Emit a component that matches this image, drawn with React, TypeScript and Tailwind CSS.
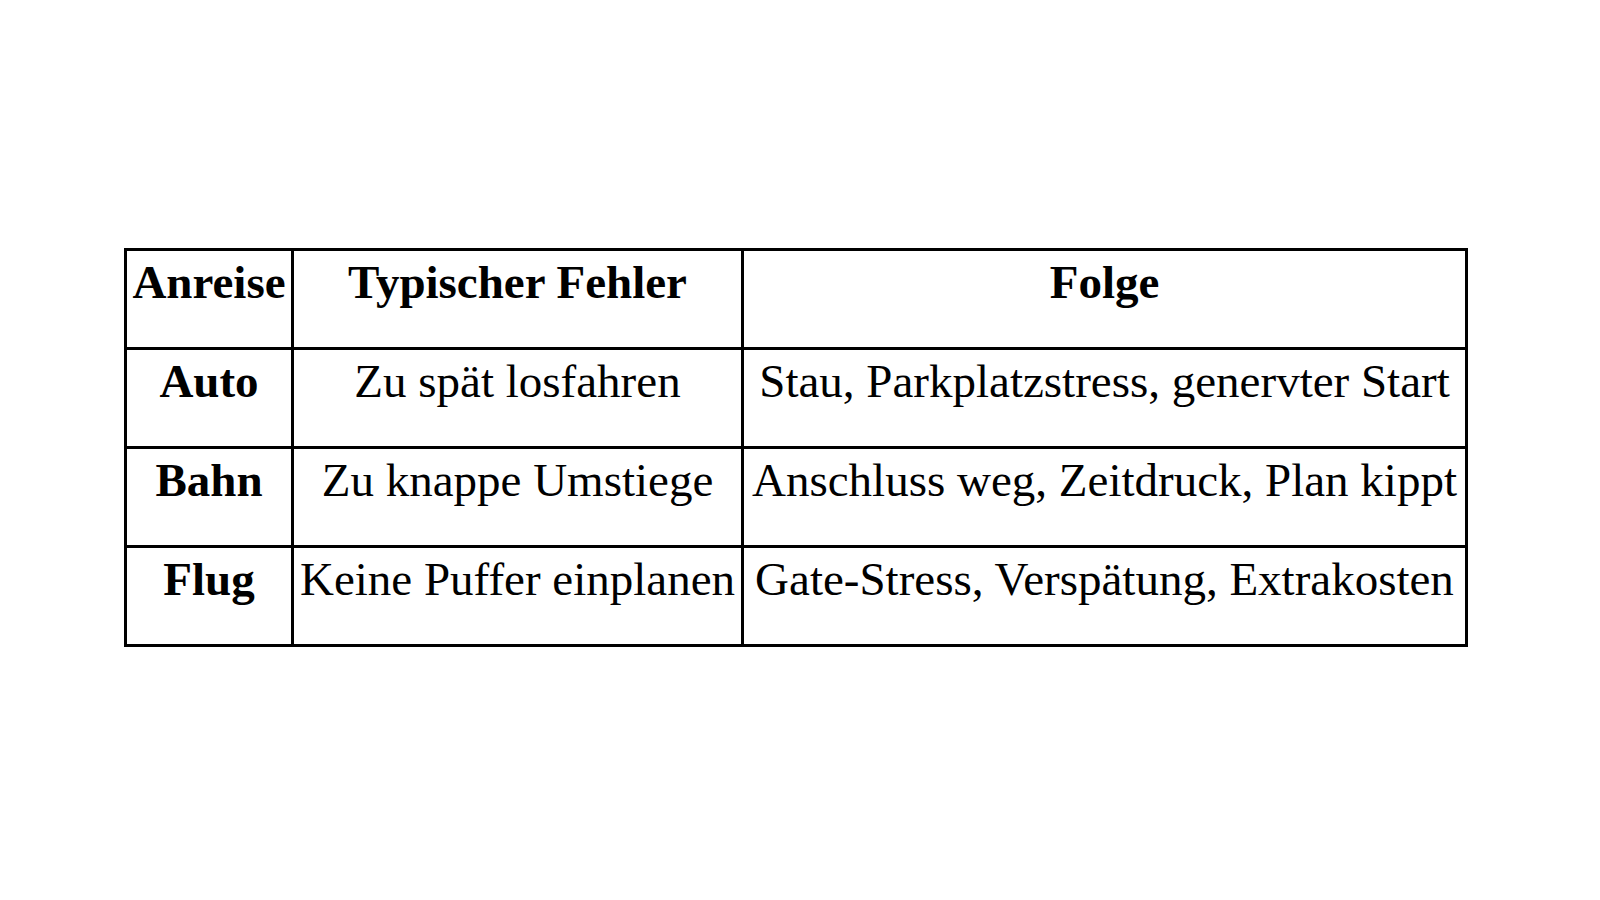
const rows = [
  ["Auto", "Zu spät losfahren", "Stau, Parkplatzstress, genervter Start"],
  ["Bahn", "Zu knappe Umstiege", "Anschluss weg, Zeitdruck, Plan kippt"],
  ["Flug", "Keine Puffer einplanen", "Gate-Stress, Verspätung, Extrakosten"],
];

const cell = "border-[3px] border-black px-[3px] pt-[4px] pb-[38px] text-center align-top whitespace-nowrap";

export default function App() {
  return (
    <div className="flex h-[900px] w-[1600px] items-start bg-white pl-[124px] pt-[248px] font-['Liberation_Serif',serif] text-[47px] leading-[54px] text-black">
      <table className="w-[1344px] table-fixed border-collapse">
        <colgroup>
          <col className="w-[167px]" />
          <col className="w-[450px]" />
          <col />
        </colgroup>
        <thead>
          <tr>
            <th className={cell + " font-bold"}>Anreise</th>
            <th className={cell + " font-bold"}>Typischer Fehler</th>
            <th className={cell + " font-bold"}>Folge</th>
          </tr>
        </thead>
        <tbody>
          {rows.map(([mode, mistake, result]) => (
            <tr key={mode}>
              <td className={cell + " font-bold"}>{mode}</td>
              <td className={cell}>{mistake}</td>
              <td className={cell}>{result}</td>
            </tr>
          ))}
        </tbody>
      </table>
    </div>
  );
}
